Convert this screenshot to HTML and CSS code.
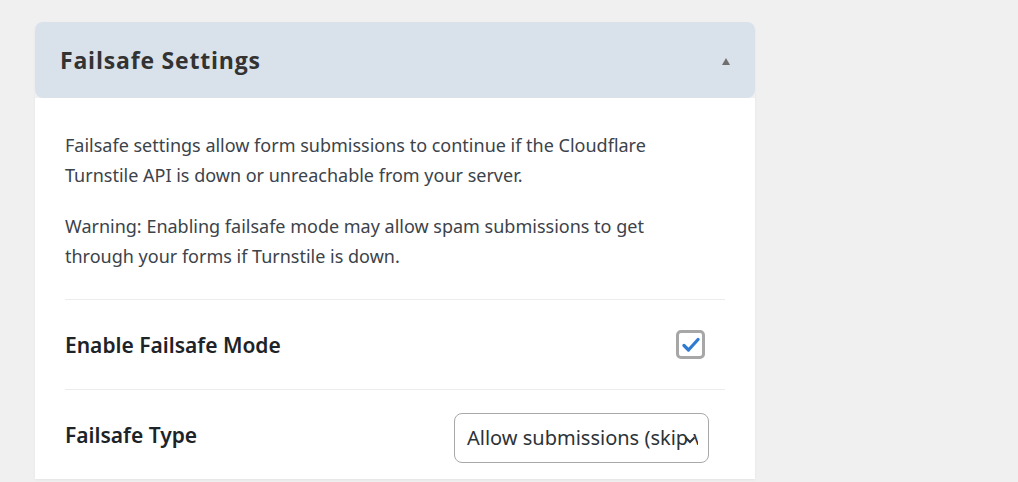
FILE: index.html
```html
<!DOCTYPE html>
<html>
<head>
<meta charset="utf-8">
<link rel="stylesheet" href="styles.css">
</head>
<body>
<div class="page">
  <section class="card">
    <header class="card-head">
      <h2 class="card-title">Failsafe Settings</h2>
      <span class="toggle"></span>
    </header>
    <div class="card-body">
      <p class="desc">Failsafe settings allow form submissions to continue if the Cloudflare Turnstile API is down or unreachable from your server.</p>
      <p class="desc">Warning: Enabling failsafe mode may allow spam submissions to get through your forms if Turnstile is down.</p>
      <div class="row">
        <span class="label">Enable Failsafe Mode</span>
        <span class="check">
          <svg width="18" height="16" viewBox="0 0 18 16"><path d="M2 8.5 L6.5 13 L16 2.5" fill="none" stroke="#2f7bd0" stroke-width="3.2" stroke-linecap="round" stroke-linejoin="round"/></svg>
        </span>
      </div>
      <div class="row">
        <span class="label">Failsafe Type</span>
        <div class="select">
          <span class="select-text">Allow submissions (skip verification)</span>
          <svg class="caret" width="12" height="8" viewBox="0 0 12 8"><path d="M1.5 1.5 L6 6 L10.5 1.5" fill="none" stroke="#2c3338" stroke-width="2"/></svg>
        </div>
      </div>
    </div>
  </section>
</div>
</body>
</html>
```
FILE: styles.css
```css
html, body {
  margin: 0;
  padding: 0;
  background: #f0f0f1;
  height: 100%;
  overflow: hidden;
}
body {
  font-family: "Noto Sans", "Open Sans", sans-serif;
  color: #3c434a;
}
.page {
  padding: 22px 0 0 35px;
}
.card {
  width: 720px;
  box-shadow: 0 1px 3px rgba(0,0,0,0.05);
  border-radius: 8px 8px 0 0;
}
.card-head {
  height: 76px;
  background: #d9e2ea;
  border-radius: 8px;
  display: flex;
  align-items: center;
  justify-content: space-between;
  padding: 0 25px 0 25px;
}
.card-title {
  margin: 0;
  font-family: "Open Sans", sans-serif;
  font-weight: 700;
  font-size: 23px;
  color: #333;
  letter-spacing: 0.8px;
}
.toggle {
  width: 0;
  height: 0;
  border-left: 4px solid transparent;
  border-right: 4px solid transparent;
  border-bottom: 7px solid #6f6f6f;
  margin-top: 2px;
}
.card-body {
  background: #fff;
  padding: 32px 30px 0 30px;
}
.desc {
  margin: 0 0 21px 0;
  max-width: 625px;
  font-size: 18px;
  line-height: 30px;
}
.desc + .desc { margin-bottom: 28px; }
.row {
  border-top: 1px solid #ececec;
  height: 89px;
  display: flex;
  align-items: center;
  justify-content: space-between;
}
.label {
  font-size: 21px;
  font-weight: 600;
  color: #1d2327;
}
.check {
  width: 23px;
  height: 23px;
  border: 3px solid #a7a7a7;
  border-radius: 5px;
  margin-right: 20px;
  display: flex;
  align-items: center;
  justify-content: center;
}
.select {
  width: 253px;
  height: 48px;
  border: 1px solid #a8a8a8;
  border-radius: 8px;
  display: flex;
  align-items: center;
  position: relative;
  overflow: hidden;
  margin-right: 16px;
  margin-top: 6px;
}
.select-text {
  padding-left: 12px;
  font-size: 20px;
  color: #2c3338;
  white-space: nowrap;
  width: 231px;
  overflow: hidden;
}
.caret {
  position: absolute;
  right: 12px;
  top: 22px;
}
```
